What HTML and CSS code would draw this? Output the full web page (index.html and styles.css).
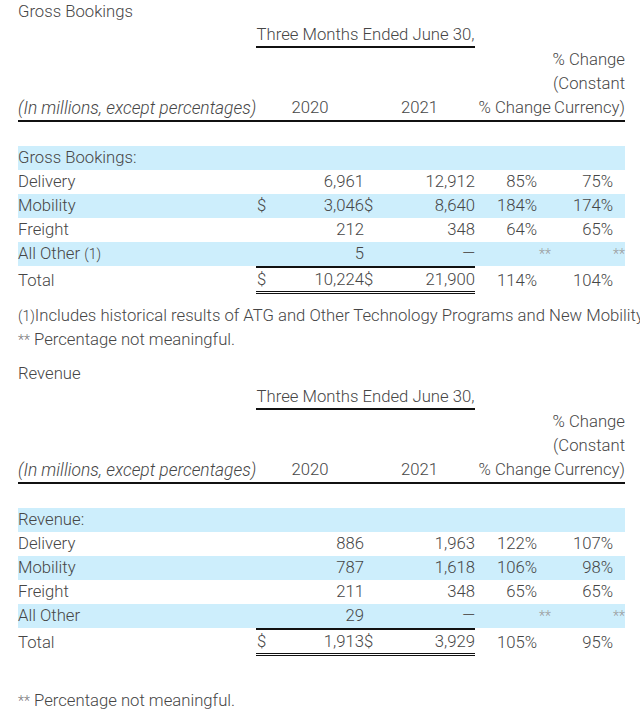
FILE: index.html
```html
<!DOCTYPE html>
<html lang="en">
<head>
<meta charset="utf-8">
<title>Gross Bookings and Revenue</title>
<link rel="stylesheet" href="styles.css">
</head>
<body>
<div class="page">
  <section class="section">
    <div class="title">Gross Bookings</div>
    <table class="fin">
      <colgroup>
        <col class="c-label"><col class="c-cur"><col class="c-val"><col class="c-cur2"><col class="c-val2"><col class="c-pct"><col class="c-pctc">
      </colgroup>
      <tr class="period">
        <td></td><td colspan="4" class="period-label">Three Months Ended June 30,</td><td></td><td></td>
      </tr>
      <tr class="head">
        <td class="units">(In millions, except percentages)</td>
        <td colspan="2" class="year">2020</td>
        <td colspan="2" class="year">2021</td>
        <td class="hpct">% Change</td>
        <td class="hpctc">% Change<br>(Constant<br>Currency)</td>
      </tr>
      <tr class="spacer"><td colspan="7"></td></tr>
      <tr class="band"><td>Gross Bookings:</td><td colspan="6"></td></tr>
      <tr><td>Delivery</td><td></td><td class="num">6,961</td><td></td><td class="num">12,912</td><td class="pct">85%</td><td class="pctc">75%</td></tr>
      <tr class="band"><td>Mobility</td><td class="cur">$</td><td class="num">3,046</td><td class="cur2">$</td><td class="num">8,640</td><td class="pct">184%</td><td class="pctc">174%</td></tr>
      <tr><td>Freight</td><td></td><td class="num">212</td><td></td><td class="num">348</td><td class="pct">64%</td><td class="pctc">65%</td></tr>
      <tr class="band"><td>All Other <span class="ref">(1)</span></td><td></td><td class="num">5</td><td></td><td class="num dash">—</td><td class="na">**</td><td class="na">**</td></tr>
      <tr class="total"><td>Total</td><td class="cur rule">$</td><td class="num rule">10,224</td><td class="cur2 rule">$</td><td class="num rule">21,900</td><td class="pct">114%</td><td class="pctc">104%</td></tr>
    </table>
    <div class="notes">
      <p class="note"><span class="ref">(1)</span>Includes historical results of ATG and Other Technology Programs and New Mobility.</p>
      <p class="note"><span class="stars">**</span> Percentage not meaningful.</p>
    </div>
  </section>

  <section class="section">
    <div class="title">Revenue</div>
    <table class="fin">
      <colgroup>
        <col class="c-label"><col class="c-cur"><col class="c-val"><col class="c-cur2"><col class="c-val2"><col class="c-pct"><col class="c-pctc">
      </colgroup>
      <tr class="period">
        <td></td><td colspan="4" class="period-label">Three Months Ended June 30,</td><td></td><td></td>
      </tr>
      <tr class="head">
        <td class="units">(In millions, except percentages)</td>
        <td colspan="2" class="year">2020</td>
        <td colspan="2" class="year">2021</td>
        <td class="hpct">% Change</td>
        <td class="hpctc">% Change<br>(Constant<br>Currency)</td>
      </tr>
      <tr class="spacer"><td colspan="7"></td></tr>
      <tr class="band"><td>Revenue:</td><td colspan="6"></td></tr>
      <tr><td>Delivery</td><td></td><td class="num">886</td><td></td><td class="num">1,963</td><td class="pct">122%</td><td class="pctc">107%</td></tr>
      <tr class="band"><td>Mobility</td><td></td><td class="num">787</td><td></td><td class="num">1,618</td><td class="pct">106%</td><td class="pctc">98%</td></tr>
      <tr><td>Freight</td><td></td><td class="num">211</td><td></td><td class="num">348</td><td class="pct">65%</td><td class="pctc">65%</td></tr>
      <tr class="band"><td>All Other</td><td></td><td class="num">29</td><td></td><td class="num dash">—</td><td class="na">**</td><td class="na">**</td></tr>
      <tr class="total"><td>Total</td><td class="cur rule">$</td><td class="num rule">1,913</td><td class="cur2 rule">$</td><td class="num rule">3,929</td><td class="pct">105%</td><td class="pctc">95%</td></tr>
    </table>
    <div class="notes notes-last">
      <p class="note"><span class="stars">**</span> Percentage not meaningful.</p>
    </div>
  </section>
</div>
</body>
</html>
```

FILE: styles.css
```css
html, body {
  margin: 0;
  padding: 0;
  background: #ffffff;
}

body {
  font-family: Roboto, "Liberation Sans", sans-serif;
  font-weight: 300;
  font-size: 16.7px;
  line-height: 24px;
  color: #464646;
}

.page {
  width: 640px;
  overflow: hidden;
  padding-left: 18px;
  box-sizing: border-box;
}

.section {
  display: flex;
  flex-direction: column;
}

.title {
  height: 24px;
  line-height: 24px;
}

.fin {
  width: 607px;
  table-layout: fixed;
  border-collapse: separate;
  border-spacing: 0;
  font-size: 16.7px;
}

.fin td {
  padding: 0;
  line-height: 24px;
  white-space: nowrap;
}

.c-label { width: 238px; }
.c-cur { width: 16px; }
.c-val { width: 92px; }
.c-cur2 { width: 16px; }
.c-val2 { width: 95px; }
.c-pct { width: 76px; }
.c-pctc { width: 74px; }

.period td {
  line-height: 22px;
}

.period-label {
  text-align: center;
  border-bottom: 2px solid #111;
}

.head td {
  vertical-align: bottom;
  border-bottom: 2px solid #111;
}

.units {
  font-style: italic;
  font-size: 17.4px;
  overflow: visible;
}

.year {
  text-align: center;
}

.hpct,
.hpctc {
  text-align: right;
}

.spacer td {
  height: 24px;
}

.band td {
  background: #cdeefc;
}

.num {
  text-align: right;
}

.cur {
  padding-left: 1px !important;
}

.cur2 {
  text-align: left;
}

.pct {
  text-align: right;
  padding-right: 14px !important;
}

.pctc {
  text-align: right;
  padding-right: 12px !important;
}

.na {
  text-align: right;
  font-size: 14px;
  color: #9a9a9a;
  vertical-align: middle;
}

.dash {
  color: #5a5a5a;
}

.ref {
  font-size: 14px;
}

.total td {
  line-height: 23px;
}

.total .rule {
  border-top: 2px solid #111;
  border-bottom: 3px double #111;
}

.notes {
  margin-top: 10px;
  margin-bottom: 10px;
}

.notes-last {
  margin-top: 33px;
  margin-bottom: 0;
}

.note {
  margin: 0;
  white-space: nowrap;
  line-height: 24px;
}

.stars {
  font-size: 14px;
  color: #777;
}
```
